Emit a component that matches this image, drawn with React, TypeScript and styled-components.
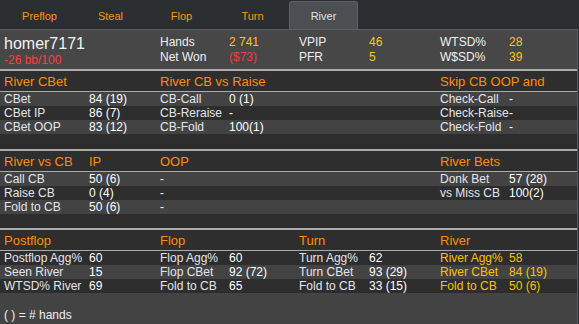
import React from 'react'
import styled, { createGlobalStyle } from 'styled-components'

type Cell = { text: string; tone?: 'label' | 'value' | 'yellow' }
type Row = Cell[]

const GlobalStyle = createGlobalStyle`
  html, body {
    margin: 0;
    padding: 0;
    background: #2b2e31;
    font-family: "Liberation Sans", Arial, sans-serif;
  }
`

const tabs = ['Preflop', 'Steal', 'Flop', 'Turn', 'River']

const cbetRows: Row[] = [
  [{ text: 'CBet' }, { text: '84 (19)', tone: 'value' }, { text: 'CB-Call' }, { text: '0 (1)', tone: 'value' }, { text: '' }, { text: '' }, { text: 'Check-Call' }, { text: '-', tone: 'value' }],
  [{ text: 'CBet IP' }, { text: '86 (7)', tone: 'value' }, { text: 'CB-Reraise' }, { text: '-', tone: 'value' }, { text: '' }, { text: '' }, { text: 'Check-Raise' }, { text: '-', tone: 'value' }],
  [{ text: 'CBet OOP' }, { text: '83 (12)', tone: 'value' }, { text: 'CB-Fold' }, { text: '100(1)', tone: 'value' }, { text: '' }, { text: '' }, { text: 'Check-Fold' }, { text: '-', tone: 'value' }],
]

const vsCbRows: Row[] = [
  [{ text: 'Call CB' }, { text: '50 (6)', tone: 'value' }, { text: '-', tone: 'value' }, { text: '' }, { text: '' }, { text: '' }, { text: 'Donk Bet' }, { text: '57 (28)', tone: 'value' }],
  [{ text: 'Raise CB' }, { text: '0 (4)', tone: 'value' }, { text: '-', tone: 'value' }, { text: '' }, { text: '' }, { text: '' }, { text: 'vs Miss CB' }, { text: '100(2)', tone: 'value' }],
  [{ text: 'Fold to CB' }, { text: '50 (6)', tone: 'value' }, { text: '-', tone: 'value' }, { text: '' }, { text: '' }, { text: '' }, { text: '' }, { text: '' }],
]

const postflopRows: Row[] = [
  [{ text: 'Postflop Agg%' }, { text: '60', tone: 'value' }, { text: 'Flop Agg%' }, { text: '60', tone: 'value' }, { text: 'Turn Agg%' }, { text: '62', tone: 'value' }, { text: 'River Agg%', tone: 'yellow' }, { text: '58', tone: 'yellow' }],
  [{ text: 'Seen River' }, { text: '15', tone: 'value' }, { text: 'Flop CBet' }, { text: '92 (72)', tone: 'value' }, { text: 'Turn CBet' }, { text: '93 (29)', tone: 'value' }, { text: 'River CBet', tone: 'yellow' }, { text: '84 (19)', tone: 'yellow' }],
  [{ text: 'WTSD% River' }, { text: '69', tone: 'value' }, { text: 'Fold to CB' }, { text: '65', tone: 'value' }, { text: 'Fold to CB' }, { text: '33 (15)', tone: 'value' }, { text: 'Fold to CB', tone: 'yellow' }, { text: '50 (6)', tone: 'yellow' }],
]

const Section: React.FC<{ heads: string[]; rows: Row[]; firstLight: boolean; tail?: number }> = ({
  heads,
  rows,
  firstLight,
  tail = 0,
}) => (
  <>
    <Rule />
    <HeadRow>
      {heads.map((h, i) => (
        <HeadCell key={i}>{h}</HeadCell>
      ))}
    </HeadRow>
    <ThinRule />
    {rows.map((row, r) => (
      <DataRow key={r} light={(r % 2 === 0) === firstLight}>
        {row.map((c, i) => (
          <DataCell key={i} tone={c.tone || 'label'}>
            {c.text}
          </DataCell>
        ))}
      </DataRow>
    ))}
    {tail > 0 && <BlankRow size={tail} />}
  </>
)

const App: React.FC = () => {
  return (
    <Page>
      <GlobalStyle />
      <TabBar>
        {tabs.map((t) => (
          <Tab key={t} active={t === 'River'}>
            {t}
          </Tab>
        ))}
      </TabBar>
      <Panel>
        <Summary>
          <PlayerBlock>
            <PlayerName>homer7171</PlayerName>
            <WinRate>-26 bb/100</WinRate>
          </PlayerBlock>
          <StatCell>Hands</StatCell>
          <StatCell tone="yellow">2 741</StatCell>
          <StatCell>VPIP</StatCell>
          <StatCell tone="yellow">46</StatCell>
          <StatCell>WTSD%</StatCell>
          <StatCell tone="yellow">28</StatCell>
          <StatCell>Net Won</StatCell>
          <StatCell tone="red">($73)</StatCell>
          <StatCell>PFR</StatCell>
          <StatCell tone="yellow">5</StatCell>
          <StatCell>W$SD%</StatCell>
          <StatCell tone="yellow">39</StatCell>
        </Summary>
        <Section
          heads={['River CBet', '', 'River CB vs Raise', '', '', '', 'Skip CB OOP and', '']}
          rows={cbetRows}
          firstLight
          tail={15}
        />
        <Section
          heads={['River vs CB', 'IP', 'OOP', '', '', '', 'River Bets', '']}
          rows={vsCbRows}
          firstLight
          tail={14}
        />
        <Section
          heads={['Postflop', '', 'Flop', '', 'Turn', '', 'River', '']}
          rows={postflopRows}
          firstLight={false}
        />
        <Footer>( ) = # hands</Footer>
      </Panel>
    </Page>
  )
}

const columns = '85px 71px 69px 70px 70px 71px 69px 1fr'

const Page = styled.div`
  width: 579px;
  height: 324px;
  overflow: hidden;
  background: #2b2e31;
`

const TabBar = styled.div`
  display: flex;
  align-items: flex-end;
  height: 29px;
  padding-left: 5px;
  box-sizing: border-box;
`

const Tab = styled.div<{ active?: boolean }>`
  width: 69px;
  height: 28px;
  margin-right: 2px;
  box-sizing: border-box;
  display: flex;
  align-items: center;
  justify-content: center;
  font-size: 11px;
  color: ${({ active }) => (active ? '#dfe3ea' : '#ff9415')};
  background: ${({ active }) => (active ? '#4b4e52' : 'transparent')};
  border: 1px solid ${({ active }) => (active ? '#5c6064' : 'transparent')};
  border-bottom: none;
  border-radius: 3px 3px 0 0;
`

const Panel = styled.div`
  width: 577px;
  height: 295px;
  border-right: 1px solid #5a5a5a;
  background: #2e2e2e;
  display: flex;
  flex-direction: column;
`

const Summary = styled.div`
  display: grid;
  grid-template-columns: ${columns};
  grid-template-rows: 15px 15px;
  align-content: start;
  height: 40px;
  padding: 5px 0 0 4px;
  box-sizing: border-box;
  background: #474747;
  border-top: 1px solid #5c5f62;
`

const PlayerBlock = styled.div`
  grid-column: 1 / 3;
  grid-row: 1 / 3;
  display: flex;
  flex-direction: column;
`

const PlayerName = styled.div`
  font-size: 16px;
  line-height: 18px;
  color: #f4f4f4;
`

const WinRate = styled.div`
  font-size: 12px;
  line-height: 14px;
  color: #ff3c3c;
`

const StatCell = styled.div<{ tone?: 'yellow' | 'red' }>`
  font-size: 12px;
  line-height: 15px;
  white-space: nowrap;
  color: ${({ tone }) => (tone === 'yellow' ? '#ffc21a' : tone === 'red' ? '#f03c3c' : '#eef0f4')};
`

const Rule = styled.div`
  height: 2px;
  background: #ababab;
  flex-shrink: 0;
`

const ThinRule = styled(Rule)`
  height: 1px;
`

const HeadRow = styled.div`
  display: grid;
  grid-template-columns: ${columns};
  height: 20px;
  padding-left: 4px;
  align-items: center;
  background: #2e2e2e;
`

const HeadCell = styled.div`
  font-size: 13px;
  color: #ff8c0a;
  white-space: nowrap;
`

const DataRow = styled.div<{ light: boolean }>`
  display: grid;
  grid-template-columns: ${columns};
  height: 14px;
  padding-left: 4px;
  align-items: center;
  background: ${({ light }) => (light ? '#434343' : '#2d2d2d')};
`

const DataCell = styled.div<{ tone: 'label' | 'value' | 'yellow' }>`
  font-size: 12px;
  line-height: 14px;
  white-space: nowrap;
  color: ${({ tone }) => (tone === 'yellow' ? '#f7c300' : tone === 'value' ? '#ffffff' : '#e2e5ec')};
`

const BlankRow = styled.div<{ size: number }>`
  height: ${({ size }) => size}px;
  flex-shrink: 0;
  background: #2d2d2d;
`

const Footer = styled.div`
  flex: 1;
  background: #434343;
  padding: 15px 0 0 4px;
  font-size: 12px;
  color: #eef0f4;
`

export default App
